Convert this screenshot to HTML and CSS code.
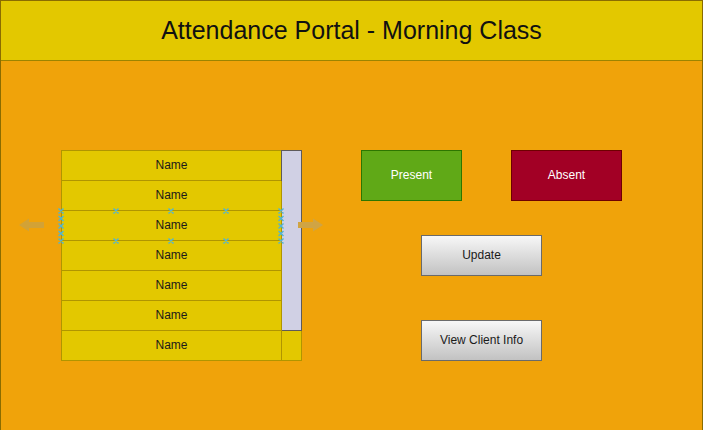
FILE: index.html
```html
<!DOCTYPE html>
<html>
<head>
<meta charset="utf-8">
<link rel="stylesheet" href="styles.css">
</head>
<body>
<div class="app">
  <header class="header">Attendance Portal - Morning Class</header>
  <main class="main">
    <div class="list-wrap">
      <div class="list">
        <div class="cell">Name</div>
        <div class="thumb"></div>
        <div class="cell">Name</div>
        <div class="cell">Name</div>
        <div class="cell">Name</div>
        <div class="cell">Name</div>
        <div class="cell">Name</div>
        <div class="cell">Name</div>
        <div class="cell side"></div>
      </div>
      <svg class="arrow arrow-left" width="26" height="14" viewBox="0 0 26 14">
        <path d="M0 7 L10 0.5 L10 4 L25 4 L25 10 L10 10 L10 13.5 Z" />
      </svg>
      <svg class="arrow arrow-right" width="26" height="14" viewBox="0 0 26 14">
        <path d="M26 7 L16 0.5 L16 4 L1 4 L1 10 L16 10 L16 13.5 Z" />
      </svg>
      <svg class="handles" width="1" height="1" viewBox="0 0 1 1">
        <g class="marks">
          <path d="M-2.5 -2.5 l5 5 M2.5 -2.5 l-5 5 M52.5 -2.5 l5 5 M57.5 -2.5 l-5 5 M107.5 -2.5 l5 5 M112.5 -2.5 l-5 5 M162.5 -2.5 l5 5 M167.5 -2.5 l-5 5 M217.5 -2.5 l5 5 M222.5 -2.5 l-5 5"/>
          <path d="M-2.5 27.5 l5 5 M2.5 27.5 l-5 5 M52.5 27.5 l5 5 M57.5 27.5 l-5 5 M107.5 27.5 l5 5 M112.5 27.5 l-5 5 M162.5 27.5 l5 5 M167.5 27.5 l-5 5 M217.5 27.5 l5 5 M222.5 27.5 l-5 5"/>
          <path d="M-2.5 5 l5 5 M2.5 5 l-5 5 M-2.5 12.5 l5 5 M2.5 12.5 l-5 5 M-2.5 20 l5 5 M2.5 20 l-5 5"/>
          <path d="M217.5 5 l5 5 M222.5 5 l-5 5 M217.5 12.5 l5 5 M222.5 12.5 l-5 5 M217.5 20 l5 5 M222.5 20 l-5 5"/>
        </g>
      </svg>
    </div>
    <div class="actions">
      <div class="status-row">
        <div class="btn present">Present</div>
        <div class="btn absent">Absent</div>
      </div>
      <div class="btn gray update">Update</div>
      <div class="btn gray view">View Client Info</div>
    </div>
  </main>
</div>
</body>
</html>
```

FILE: styles.css
```css
* { box-sizing: border-box; }
html, body { margin: 0; padding: 0; }
body {
  font-family: "Liberation Sans", Arial, sans-serif;
  background: #f0a30a;
}
.app {
  width: 703px;
  height: 430px;
  border: 1px solid #8a6c00;
  border-bottom: none;
  background: #f0a30a;
  overflow: hidden;
}
.header {
  height: 60px;
  background: #e3c800;
  border-bottom: 1px solid #9c8400;
  display: flex;
  align-items: center;
  justify-content: center;
  font-size: 25px;
  color: #111;
}
.main {
  display: flex;
  align-items: flex-start;
  padding: 89px 0 0 60px;
  gap: 59px;
}
.list-wrap {
  position: relative;
}
.list {
  display: grid;
  grid-template-columns: 220px 20px;
  grid-template-rows: repeat(7, 30px);
  border-top: 1px solid #b09500;
  border-left: 1px solid #b09500;
  width: 241px;
}
.cell {
  grid-column: 1;
  background: #e3c800;
  border-right: 1px solid #b09500;
  border-bottom: 1px solid #b09500;
  display: flex;
  align-items: center;
  justify-content: center;
  font-size: 12px;
  color: #1a1a1a;
  padding-bottom: 1px;
}
.cell.side {
  grid-column: 2;
  grid-row: 7;
}
.thumb {
  grid-column: 2;
  grid-row: 1 / span 6;
  margin: -1px 0 0 -1px;
  background: #d0d0e4;
  border: 1px solid #5e5a5a;
}
.arrow {
  position: absolute;
  fill: #d2a236;
}
.arrow-left { left: -42px; top: 68px; }
.arrow-right { left: 236px; top: 68px; fill: #d0a444; }
.handles {
  position: absolute;
  left: 0;
  top: 61px;
  overflow: visible;
}
.marks {
  stroke: #4fb5d6;
  stroke-width: 1.4;
  fill: none;
}
.actions {
  display: flex;
  flex-direction: column;
  align-items: flex-start;
}
.status-row {
  display: flex;
  gap: 49px;
}
.btn {
  display: flex;
  align-items: center;
  justify-content: center;
  font-size: 12px;
  padding-bottom: 2px;
}
.present {
  width: 101px;
  height: 51px;
  background: #60a917;
  border: 1px solid #2d7600;
  color: #ffffff;
}
.absent {
  width: 111px;
  height: 51px;
  background: #a20025;
  border: 1px solid #6f0000;
  color: #ffffff;
}
.gray {
  width: 121px;
  height: 41px;
  margin-left: 60px;
  background: linear-gradient(to bottom, #f7f7f7, #c2c2c2);
  border: 1px solid #6a6a6a;
  color: #1a1a1a;
}
.update { margin-top: 34px; }
.view { margin-top: 44px; }
```
